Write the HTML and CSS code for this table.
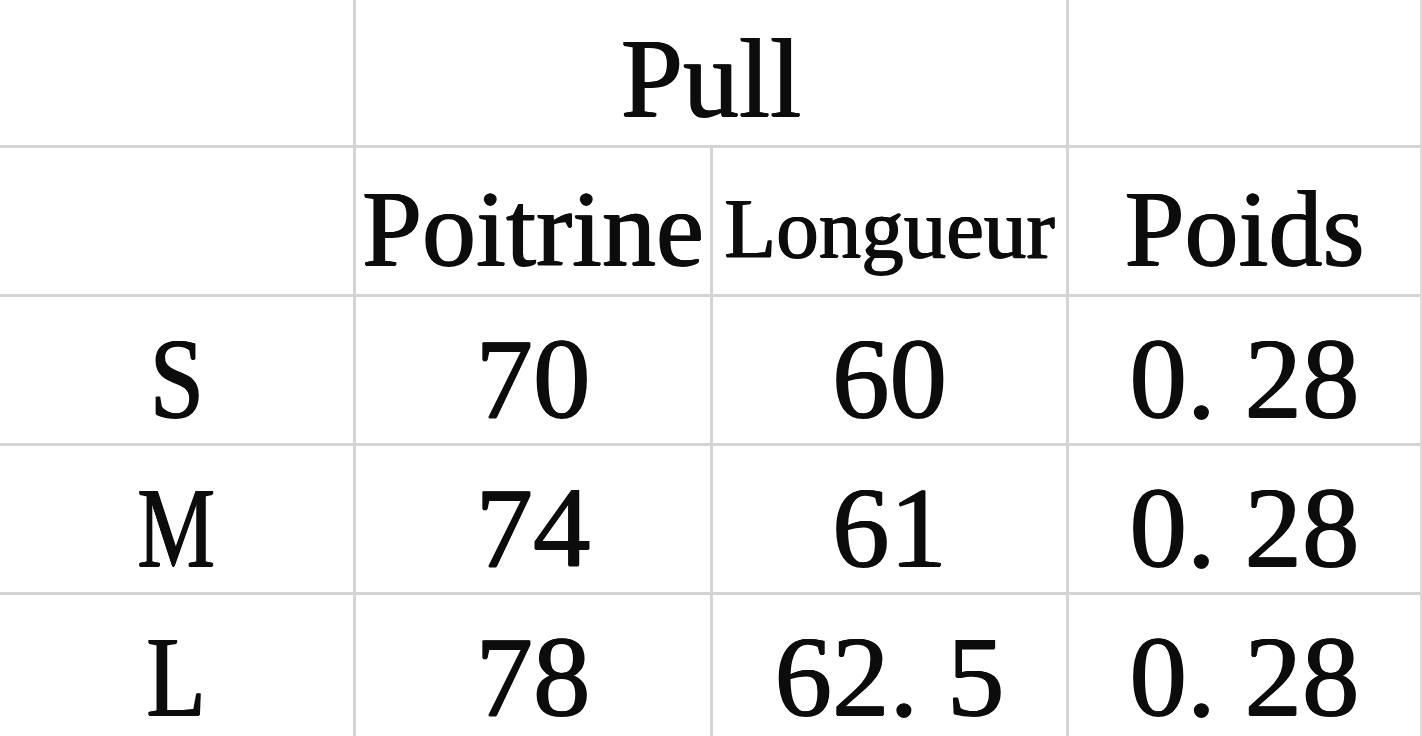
FILE: index.html
```html
<!DOCTYPE html>
<html lang="fr">
<head>
<meta charset="utf-8">
<title>Pull</title>
<link rel="stylesheet" href="styles.css">
</head>
<body>
<div class="sheet">
  <div class="cell"></div>
  <div class="cell span2 title">Pull</div>
  <div class="cell"></div>

  <div class="cell"></div>
  <div class="cell head head-big">Poitrine</div>
  <div class="cell head head-small">Longueur</div>
  <div class="cell head head-big">Poids</div>

  <div class="cell data"><span class="size">S</span></div>
  <div class="cell data">70</div>
  <div class="cell data">60</div>
  <div class="cell data">0. 28</div>

  <div class="cell data"><span class="size size-m">M</span></div>
  <div class="cell data">74</div>
  <div class="cell data">61</div>
  <div class="cell data">0. 28</div>

  <div class="cell data"><span class="size">L</span></div>
  <div class="cell data">78</div>
  <div class="cell data">62. 5</div>
  <div class="cell data">0. 28</div>
</div>
</body>
</html>
```
FILE: styles.css
```css
html, body {
  margin: 0;
  padding: 0;
  background: #ffffff;
  overflow: hidden;
}

.sheet {
  display: grid;
  grid-template-columns: 353px 354px 353px 351px;
  grid-template-rows: 145px 146px 146px 146px 146px;
  gap: 3px;
  background: #d4d4d4;
  border-right: 2px solid #dcdcdc;
  width: 1420px;
  font-family: "Liberation Serif", "Times New Roman", serif;
  color: #0c0c0c;
}

.cell {
  background: #ffffff;
  display: flex;
  justify-content: center;
  align-items: flex-start;
  line-height: 1;
  white-space: nowrap;
  text-shadow: 0.8px 0 0 #0c0c0c, -0.8px 0 0 #0c0c0c, 0 0.5px 0 #0c0c0c;
}

.span2 {
  grid-column: span 2;
}

.title {
  font-size: 112px;
  padding-top: 22px;
}

.head-big {
  font-size: 108px;
  padding-top: 27px;
}

.head-small {
  font-size: 85px;
  padding-top: 38px;
}

.data {
  font-size: 115px;
  padding-top: 24px;
}

.size {
  display: inline-block;
  transform: scaleX(0.85);
}

.size-m {
  transform: scaleX(0.76);
}
```
